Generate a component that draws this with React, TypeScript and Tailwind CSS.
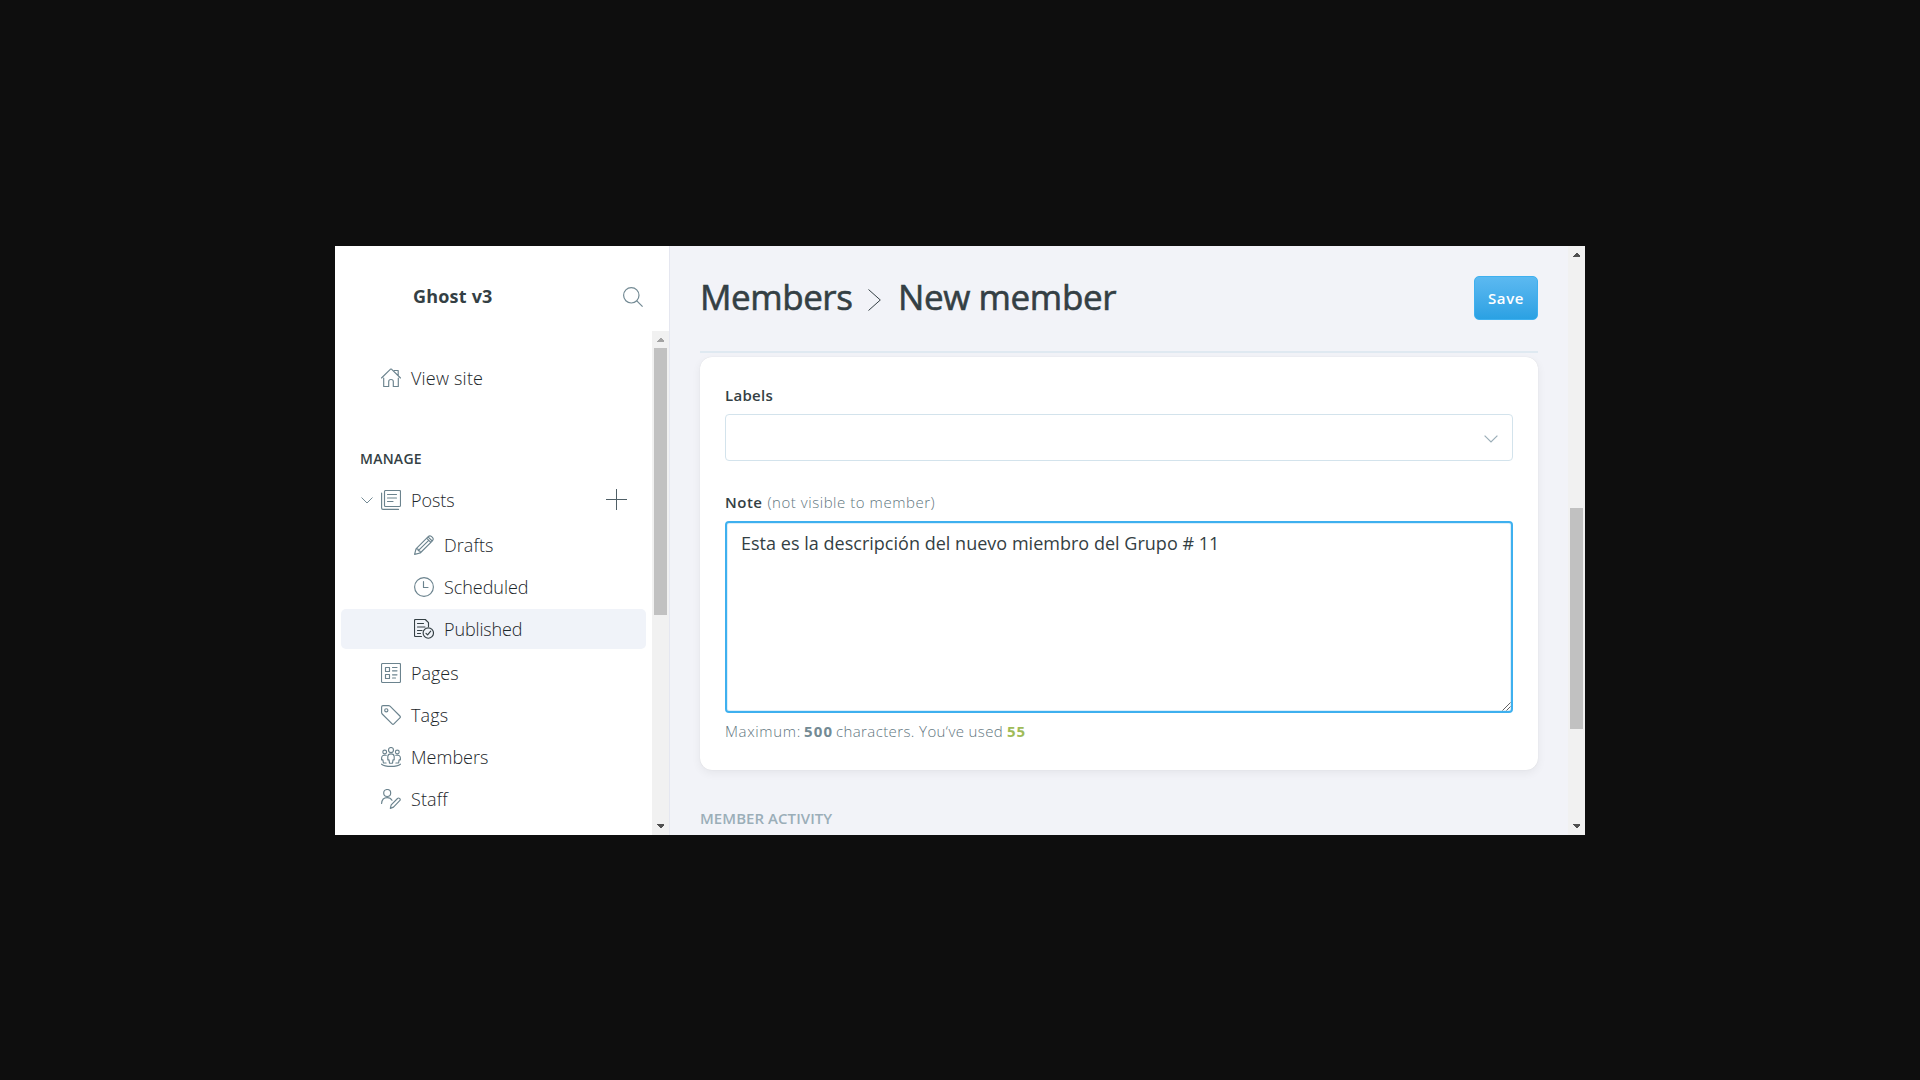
import type { ReactNode } from 'react';

function Icon({ children, className = 'text-[#6b838e]' }: { children: ReactNode; className?: string }) {
  return (
    <svg viewBox="0 0 20 20" className={`size-5 shrink-0 ${className}`} fill="none" stroke="currentColor" strokeWidth="1.15" strokeLinecap="round" strokeLinejoin="round">
      {children}
    </svg>
  );
}

const HomeIcon = () => (
  <Icon>
    <path d="M.5 10 9.3 1.3q.7-.6 1.4 0L19.5 10M13.2 2.5h4v5M2.7 10v8.500h5v-5q0-2 2.300-2t2.300 2v5h5V10" />
  </Icon>
);
const PostsIcon = () => (
  <Icon>
    <rect x="3.5" y=".5" width="16" height="16" rx="1" />
    <path d="M.6 3v15q0 1.4 1.4 1.4h15.5M6.5 4.5h9M6.5 8h9M6.5 11.5h5.5" />
  </Icon>
);
const PencilIcon = () => (
  <Icon>
    <path d="M.6 19.4 2 13.8 14.2 1.6q1.5-1.5 3.2-.2l1.2 1.2q1.3 1.6-.2 3.2L6.2 18ZM2 13.8l2 .3.3 1.6 1.6.3.3 2M12.6 3.2l4.2 4.2M14 1.8l4.2 4.2M4.3 15.7 14.7 5.3" />
  </Icon>
);
const ClockIcon = () => (
  <Icon>
    <circle cx="10" cy="10" r="9.4" />
    <path d="M9.5 4.500v6h4.500" />
  </Icon>
);
const PublishedIcon = () => (
  <Icon className="text-[#343f44]">
    <path d="M7.5 17.5h-6q-1 0-1-1v-15q0-1 1-1h9.8l3.2 3.2v3.8M3.5 4.5h6M3.5 8h7.5M3.5 11.5h4.5M3.5 14.5h3" />
    <circle cx="14.3" cy="14" r="5.2" />
    <path d="m12 14.3 1.6 1.6 3.1-3.7" />
  </Icon>
);
const PagesIcon = () => (
  <Icon>
    <rect x=".5" y=".5" width="19" height="19" rx="1" />
    <path d="M4.5 4.5h4v4h-4zM4.5 11.5h4v4h-4zM11.5 4.5h4.5M11.5 7.8h4.5M11.5 11.8h4.5M11.5 15h3" />
  </Icon>
);
const TagIcon = () => (
  <Icon>
    <path d="M.6 2Q.6.6 2 .6h5.6q.8 0 1.4.6l9.9 9.8q.9.9 0 1.8l-6 6.1q-.9.9-1.8 0L1.2 9Q.6 8.4.6 7.6Z" />
    <circle cx="5.3" cy="5.3" r="1.6" />
  </Icon>
);
const MembersIcon = () => (
  <Icon>
    <circle cx="10" cy="3" r="2.5" />
    <circle cx="3.7" cy="5" r="1.9" />
    <circle cx="16.3" cy="5" r="1.9" />
    <path d="M8.5 16.2 8 12.8H6.8V9.5Q7 6.8 10 6.8t3.2 2.7v3.3H12l-.5 3.4ZM5.2 8.300Q.6 7.600.6 11v1.800h1.300l.5 3.200h2.700M14.800 8.300q4.600-.7 4.600 2.700v1.800h-1.300l-.5 3.200h-2.700M.6 17.200q2.800 2.200 9.400 2.200t9.400-2.200" />
  </Icon>
);
const StaffIcon = () => (
  <Icon>
    <circle cx="6.2" cy="4" r="3.5" />
    <path d="M.6 14.5Q1 8.6 6.2 8.6q3.2 0 4.8 2.7M9.3 19.4l.9-3.6 6.3-6.3q1-.9 2-.1l.3.3q.9 1-.1 2l-6.200 6.400Z" />
  </Icon>
);

function NavItem({ icon, label, spacing, className }: { icon: ReactNode; label: string; spacing: string; className: string }) {
  return (
    <div className={`flex items-center gap-[10px] text-[18px] font-light leading-6 text-[#1c262a] ${className}`}>
      {icon}
      <span className={`whitespace-nowrap ${spacing}`}>{label}</span>
    </div>
  );
}

function Arrow({ down = false, className }: { down?: boolean; className: string }) {
  return (
    <svg viewBox="0 0 7 4" className={`h-1 w-[7px] ${className}`} fill="currentColor" shapeRendering="crispEdges">
      <path d={down ? 'M0 0h7v1L4 4H3L0 1Z' : 'M0 4h7V3L4 0H3L0 3Z'} />
    </svg>
  );
}

function Sidebar() {
  return (
    <aside className="flex w-[335px] shrink-0 flex-col border-r border-[#e5e7f0] bg-white">
      <div className="flex h-[85px] shrink-0 items-center justify-between pl-[78px] pr-[26px] pt-4">
        <span className="mb-0.5 text-[18px] font-bold leading-6 tracking-[0.2px]">Ghost v3</span>
        <svg viewBox="0 0 20 20" className="size-5 text-[#738a94]" fill="none" stroke="currentColor" strokeWidth="1.2">
          <circle cx="8.3" cy="8.3" r="7.7" />
          <path d="m13.8 13.8 5.8 5.8" />
        </svg>
      </div>
      <div className="flex min-h-0 flex-1">
        <nav className="flex w-[317px] shrink-0 flex-col">
          <NavItem icon={<HomeIcon />} label="View site" spacing="tracking-[0.2px]" className="mt-[26px] h-[42px] pl-[46px]" />
          <h2 className="mt-[50px] h-5 pl-[25px] text-[14px] font-semibold leading-5 tracking-[0.25px]">MANAGE</h2>
          <div className="mt-[10px] flex h-[42px] items-center px-[25px] pl-[26px]">
            <svg viewBox="0 0 12 7" className="mr-2 h-[7px] w-3 text-[#738a94]" fill="none" stroke="currentColor">
              <path d="M.5.5 6 6 11.5.5" />
            </svg>
            <NavItem icon={<PostsIcon />} label="Posts" spacing="tracking-[-0.07px]" className="h-[42px]" />
            <svg viewBox="0 0 21 21" className="mb-px ml-auto size-[21px] text-[#4f5f66]" fill="none" stroke="currentColor">
              <path d="M10.5 0v21M0 10.5h21" />
            </svg>
          </div>
          <NavItem icon={<PencilIcon />} label="Drafts" spacing="tracking-[0.07px]" className="mt-[3px] h-[42px] pl-[79px]" />
          <NavItem icon={<ClockIcon />} label="Scheduled" spacing="tracking-[-0.05px]" className="h-[42px] pl-[79px]" />
          <NavItem icon={<PublishedIcon />} label="Published" spacing="tracking-[-0.13px]" className="my-px ml-[6px] h-10 w-[305px] rounded-[5px] bg-[#f0f3f9] pl-[73px]" />
          <NavItem icon={<PagesIcon />} label="Pages" spacing="tracking-[-0.04px]" className="mt-[2px] h-[42px] pl-[46px]" />
          <NavItem icon={<TagIcon />} label="Tags" spacing="tracking-[0.1px]" className="h-[42px] pl-[46px]" />
          <NavItem icon={<MembersIcon />} label="Members" spacing="tracking-[0.02px]" className="h-[42px] pl-[46px]" />
          <NavItem icon={<StaffIcon />} label="Staff" spacing="tracking-[0.1px]" className="h-[42px] pl-[46px]" />
        </nav>
        <div className="flex w-[17px] flex-col items-center bg-[#f1f1f1] py-[7px]">
          <Arrow className="text-[#a3a3a3]" />
          <div className="mr-px mt-[6px] h-[267px] w-[13px] bg-[#c1c1c1]" />
          <Arrow down className="mt-auto text-[#505050]" />
        </div>
      </div>
    </aside>
  );
}

function Content() {
  return (
    <main className="flex min-w-0 flex-1 flex-col px-[30px]">
      <header className="flex h-[107px] shrink-0 items-center justify-between border-b-2 border-[#dfe9f1]">
        <h1 className="mb-[3px] flex items-center whitespace-nowrap text-[35px] leading-[48px] [-webkit-text-stroke:0.6px_#343f44]">
          <span className="w-[168px] tracking-[-0.45px]">Members</span>
          <svg viewBox="0 0 13 22" className="mt-[5px] h-[22px] w-[13px]" fill="none" stroke="currentColor">
            <path d="M.5.5 12.3 11 .5 21.5" />
          </svg>
          <span className="ml-[17px] tracking-[-0.4px]">New member</span>
        </h1>
        <button className="mb-px h-11 w-16 rounded-[5px] border border-[#3eb0ef] bg-linear-to-b from-[#5bb9f1] to-[#2aa1e3] text-[15px] font-semibold leading-5 tracking-[0.6px] text-white">Save</button>
      </header>
      <section className="mt-1 flex h-[413px] shrink-0 flex-col rounded-xl bg-white px-[25px] pt-[28px] shadow-[0_0_1px_rgba(0,0,0,0.12),0_3px_10px_rgba(0,0,0,0.06)]">
        <label className="h-5 text-[15px] font-semibold leading-5 tracking-[0.3px]">Labels</label>
        <div className="mt-[9px] flex h-[47px] items-center justify-end rounded-[4px] border border-[#d3e3ec] pr-[14px]">
          <svg viewBox="0 0 14 8" className="mt-[2px] h-2 w-[14px] text-[#9baeb8]" fill="none" stroke="currentColor" strokeWidth="1.2">
            <path d="M.6.6 7 7 13.4.6" />
          </svg>
        </div>
        <label className="mt-[31px] flex h-5 gap-[5px] text-[15px] leading-5">
          <span className="font-semibold tracking-[0.5px]">Note</span>
          <span className="font-light tracking-[0.54px] text-[#5f7680]">(not visible to member)</span>
        </label>
        <div className="relative mt-[9px] h-[192px] rounded-[4px] border-2 border-[#3eb0ef] pl-[14px] pt-2 text-[18px] leading-6 tracking-[0.02px] shadow-[inset_0_0_0_1px_#dceffa]">
          Esta es la descripción del nuevo miembro del Grupo # 11
          <svg viewBox="0 0 9 9" className="absolute bottom-0 right-0 size-[9px] text-[#505050]" fill="none" stroke="currentColor" strokeWidth="0.9">
            <path d="m.5 8.5 8-8M4.5 8.500l4-4" />
          </svg>
        </div>
        <p className="mt-2 flex h-5 whitespace-nowrap text-[15px] font-light leading-5 text-[#5f7680]">
          <span className="w-[79px] tracking-[0.65px]">Maximum:</span>
          <b className="w-[32px] font-bold tracking-[1.2px] text-[#738a94]">500</b>
          <span className="w-[171px] tracking-[0.39px]">characters. You‘ve used</span>
          <b className="font-bold tracking-[1px] text-[#9fbb58]">55</b>
        </p>
      </section>
      <h4 className="mt-[38px] text-[15px] font-semibold leading-5 tracking-[0.05px] text-[#9baeb8]">MEMBER ACTIVITY</h4>
    </main>
  );
}

export default function App() {
  return (
    <div className="flex h-screen items-start justify-center bg-[#0e0e0e] pt-[246px] font-['Open_Sans',sans-serif] text-[#343f44]">
      <div className="flex h-[589px] w-[1250px] overflow-hidden bg-[#f2f3f8]">
        <Sidebar />
        <Content />
        <div className="flex w-[17px] shrink-0 flex-col items-center bg-[#f1f1f1] py-[7px]">
          <Arrow className="text-[#505050]" />
          <div className="mr-px mt-[251px] h-[221px] w-[13px] bg-[#c1c1c1]" />
          <Arrow down className="mt-auto text-[#505050]" />
        </div>
      </div>
    </div>
  );
}
